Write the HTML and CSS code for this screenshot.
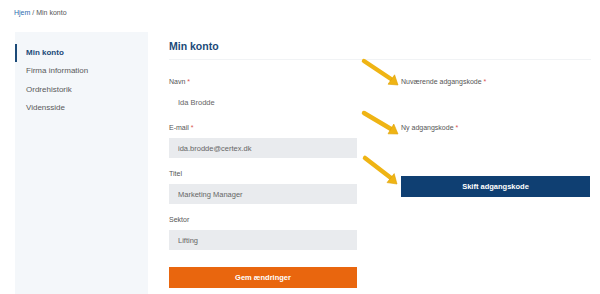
FILE: index.html
```html
<!DOCTYPE html>
<html lang="da">
<head>
<meta charset="utf-8">
<title>Min konto</title>
<link rel="stylesheet" href="styles.css">
</head>
<body>
<div class="breadcrumb"><a href="#" class="crumb-link">Hjem</a> / Min konto</div>
<div class="layout">
  <nav class="sidebar">
    <a href="#" class="nav-item active">Min konto</a>
    <a href="#" class="nav-item">Firma information</a>
    <a href="#" class="nav-item">Ordrehistorik</a>
    <a href="#" class="nav-item">Vidensside</a>
  </nav>
  <main class="main">
    <div class="main-header"><h1 class="title">Min konto</h1></div>
    <div class="cols">
      <form class="col">
        <div class="group">
          <label class="label">Navn <span class="req">*</span></label>
          <input class="field field-plain" value="Ida Brodde">
        </div>
        <div class="group">
          <label class="label">E-mail <span class="req">*</span></label>
          <input class="field" value="ida.brodde@certex.dk">
        </div>
        <div class="group">
          <label class="label">Titel</label>
          <input class="field" value="Marketing Manager">
        </div>
        <div class="group">
          <label class="label">Sektor</label>
          <input class="field" value="Lifting">
        </div>
        <button type="button" class="btn btn-orange">Gem ændringer</button>
      </form>
      <form class="col">
        <div class="group">
          <label class="label">Nuværende adgangskode <span class="req">*</span></label>
          <input class="field field-plain" type="password">
        </div>
        <div class="group">
          <label class="label">Ny adgangskode <span class="req">*</span></label>
          <input class="field field-plain" type="password">
        </div>
        <button type="button" class="btn btn-blue">Skift adgangskode</button>
      </form>
    </div>
  </main>
</div>
<svg class="arrows" width="600" height="294" viewBox="0 0 600 294" aria-hidden="true">
  <g stroke="#efb414" stroke-width="4.5" stroke-linecap="round" fill="none">
    <line x1="364" y1="61" x2="391" y2="79"/>
    <line x1="364" y1="113" x2="391" y2="129"/>
    <line x1="365" y1="158" x2="391" y2="178"/>
  </g>
  <g fill="#efb414" stroke="#dfa106" stroke-width="0.6" stroke-linejoin="round">
    <polygon points="398,85 388,84.2 394.6,74.8"/>
    <polygon points="398,134 388,133.8 393.8,124"/>
    <polygon points="397,184 387,182.6 394.2,173.6"/>
  </g>
</svg>
</body>
</html>
```

FILE: styles.css
```css
* { box-sizing: border-box; }

body {
  margin: 0;
  width: 600px;
  height: 294px;
  overflow: hidden;
  background: #ffffff;
  font-family: "Liberation Sans", Arial, sans-serif;
  color: #555;
  position: relative;
}

.breadcrumb {
  padding: 8px 14px 0;
  font-size: 7px;
  line-height: 10px;
  color: #555;
}

.crumb-link {
  color: #2d6cae;
  text-decoration: none;
}

.layout {
  display: flex;
  gap: 21px;
  margin-top: 14px;
  padding-left: 15px;
}

.sidebar {
  width: 133px;
  min-height: 262px;
  background: #f4f7fa;
  padding-top: 12px;
  display: flex;
  flex-direction: column;
}

.nav-item {
  display: block;
  padding-left: 9px;
  font-size: 8px;
  line-height: 18.3px;
  color: #5a5a5a;
  text-decoration: none;
  border-left: 2px solid transparent;
}

.nav-item.active {
  color: #1b4a78;
  font-weight: bold;
  border-left-color: #1b4a78;
}

.main {
  width: 422px;
}

.main-header {
  padding-top: 7px;
  padding-bottom: 6px;
  border-bottom: 1px solid #f1f3f5;
}

.title {
  margin: 0;
  font-size: 10.5px;
  line-height: 14px;
  font-weight: bold;
  color: #1b4a78;
}

.cols {
  display: grid;
  grid-template-columns: 188px 189px;
  column-gap: 44px;
  margin-top: 17px;
}

.col {
  margin: 0;
  display: flex;
  flex-direction: column;
}

.group {
  display: flex;
  flex-direction: column;
  margin-bottom: 11px;
}

.label {
  font-size: 7px;
  line-height: 10px;
  color: #555;
  margin-bottom: 5px;
}

.req {
  color: #d9534f;
}

.field {
  height: 20px;
  border: none;
  outline: none;
  background: #e9ebee;
  padding: 0 9px;
  font-family: "Liberation Sans", Arial, sans-serif;
  font-size: 7.5px;
  color: #666;
  width: 100%;
}

.field-plain {
  background: transparent;
}

.btn {
  height: 21px;
  border: none;
  width: 100%;
  font-family: "Liberation Sans", Arial, sans-serif;
  font-size: 7.5px;
  font-weight: bold;
  color: #ffffff;
  padding: 0;
}

.btn-orange {
  background: #e9660e;
  margin-top: 6px;
}

.btn-blue {
  background: #0f3f72;
  margin-top: 7px;
}

.arrows {
  position: absolute;
  left: 0;
  top: 0;
  pointer-events: none;
}
```
